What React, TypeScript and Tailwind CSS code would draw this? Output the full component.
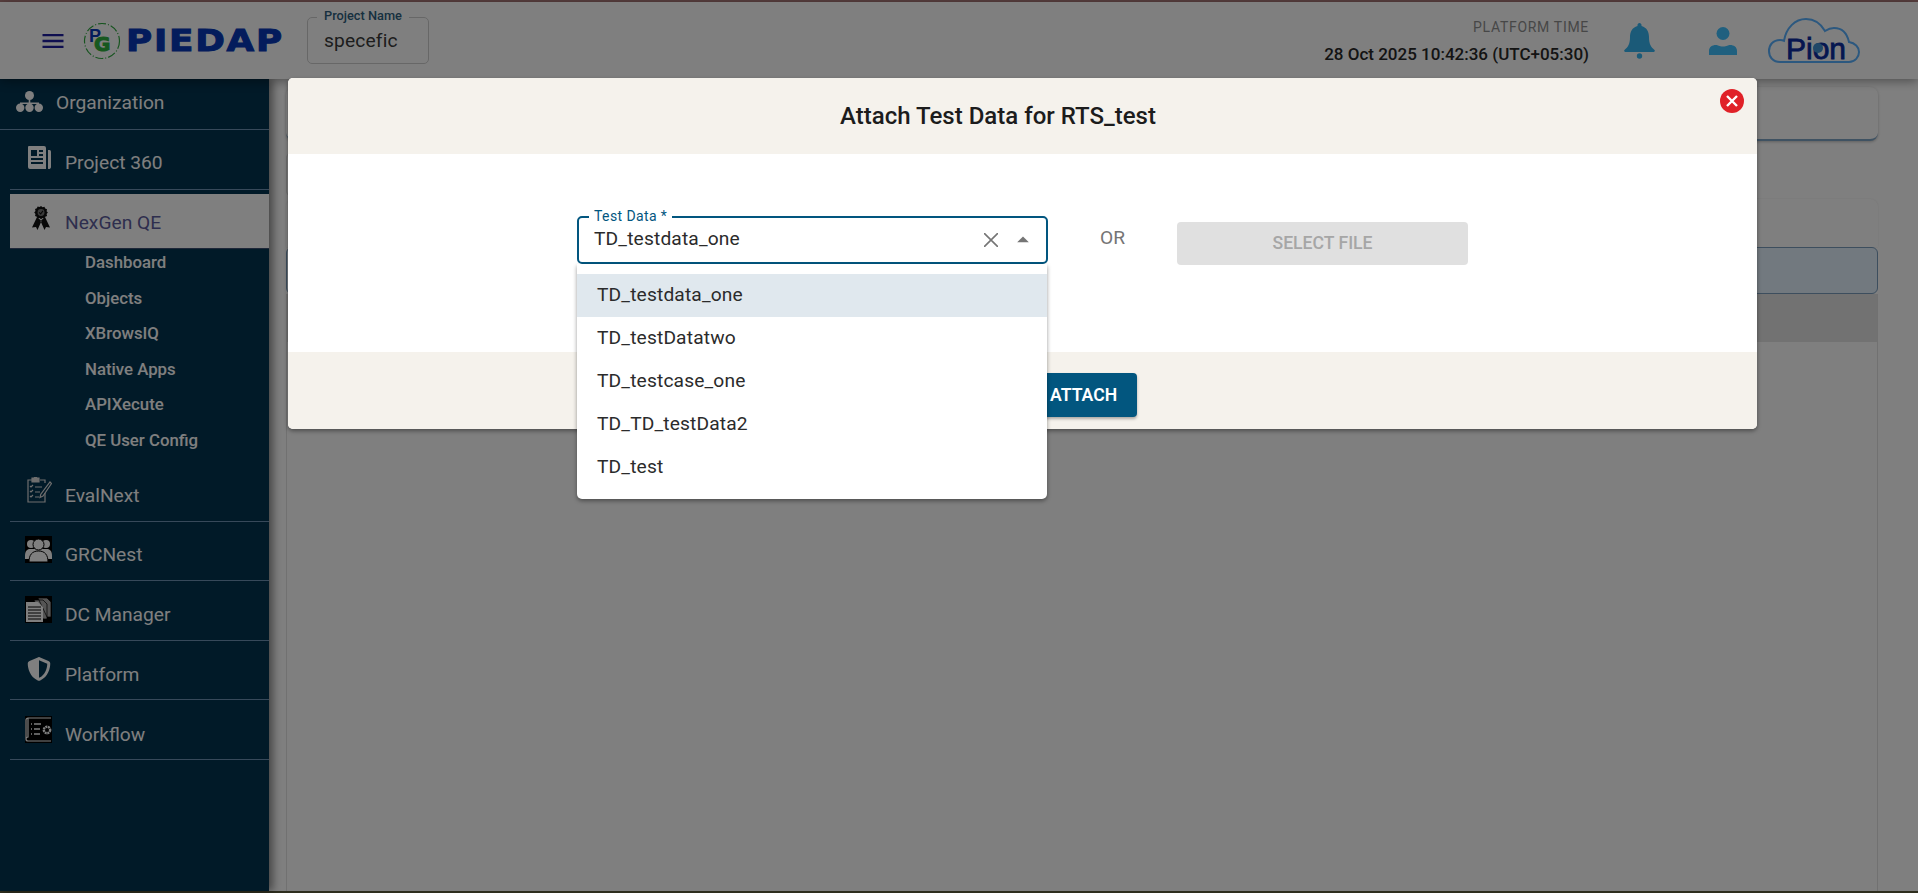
import type { ReactNode } from "react";
import { FaShieldHalved } from "react-icons/fa6";

const SUB_ITEMS = ["Dashboard", "Objects", "XBrowsIQ", "Native Apps", "APIXecute", "QE User Config"];
const OPTIONS = ["TD_testdata_one", "TD_testDatatwo", "TD_testcase_one", "TD_TD_testData2", "TD_test"];

function OrgIcon() {
  return (
    <svg viewBox="0 0 27 21" className="h-[21px] w-[27px]" fill="#fff">
      <circle cx="13.500" cy="4.500" r="4.500" />
      <path d="M12.700 8h1.600v3.500H23V14h-1.500v-1H14.300v1h-1.600v-1H5.500v1H4v-2.500h8.700z" />
      <circle cx="4.200" cy="16.800" r="4.200" />
      <circle cx="13.500" cy="16.800" r="4.200" />
      <circle cx="22.800" cy="16.800" r="4.200" />
    </svg>
  );
}

function NewsIcon() {
  return (
    <svg viewBox="0 0 24 24" className="h-[24px] w-[24px]" fill="#fff">
      <path
        fillRule="evenodd"
        d="M2 0h15a2 2 0 0 1 2 2v21H3a2 2 0 0 1-2-2V1a1 1 0 0 1 1-1zm2 4v6h6V4H4zm8 0v2h4V4h-4zm0 4v2h4V8h-4zM4 12v2h12v-2H4zm0 4v2h12v-2H4z"
      />
      <path d="M21 4h1.500a1.500 1.500 0 0 1 1.500 1.500V21a2 2 0 0 1-3 1.700V4z" />
    </svg>
  );
}

function AwardIcon() {
  return (
    <svg viewBox="0 0 18 24" className="h-[24px] w-[18px]">
      <path d="M5 11 0 21.500l4-.5 1.500 3L9.500 15zM13 11l5 10.500-4-.5-1.500 3L8.500 15z" fill="#111" />
      <g transform="translate(2.200 0) scale(.76)">
        <path
          d="M9 0l2 1.600 2.500-.6 1 2.400 2.400 1-.6 2.500L18 8.500l-1.700 2 .6 2.500-2.400 1-1 2.400-2.500-.6L9 17.500l-2-1.700-2.500.6-1-2.400-2.400-1 .6-2.500L0 8.500l1.700-2-.6-2.500 2.400-1 1-2.400 2.500.6z"
          fill="#111"
        />
        <circle cx="9" cy="8.500" r="4.500" fill="#777" />
        <path d="M6.500 8.500l2 2 3-4" stroke="#111" strokeWidth="1.500" fill="none" />
      </g>
    </svg>
  );
}

function EvalIcon() {
  return (
    <svg viewBox="0 0 26 26" className="h-[26px] w-[26px]" fill="none" stroke="#ddd" strokeWidth="1.200">
      <path d="M7 3H2v22h17v-9M14 3h5v3" />
      <path d="M6 1h2l1-1h1l1 1h2v4H6z" fill="#ddd" />
      <path d="M4 9l1 1 2-2M4 14l1 1 2-2M4 19l1 1 2-2M9 10h7M9 15h5M9 20h4" />
      <path d="M24 5l1.500 1.500L17 19l-3 1.500.8-3.300z" />
    </svg>
  );
}

function GroupIcon() {
  return (
    <svg viewBox="0 0 27 27" className="h-[27px] w-[27px] bg-black" fill="#fff">
      <circle cx="6" cy="8" r="4" />
      <circle cx="21" cy="8" r="4" />
      <path d="M0 20c0-5 2-7 5-7h17c3 0 5 2 5 7v3H0z" />
      <circle cx="13.500" cy="8.500" r="5.500" stroke="#000" />
      <path d="M4 26c0-7 3-11 9.500-11S23 19 23 26z" stroke="#000" />
    </svg>
  );
}

function DocsIcon() {
  return (
    <svg viewBox="0 0 27 27" className="h-[27px] w-[27px] bg-black">
      <path d="M13 2h9l4 4v15h-4zM9 4h9l4 4v15h-4z" fill="#aaa" stroke="#000" strokeWidth=".700" />
      <path d="M1 6h12l5 5v15H1z" fill="#fff" />
      <path d="M3 11h13M3 14h13M3 17h13M3 20h13M3 23h13" stroke="#000" strokeWidth="1" />
    </svg>
  );
}

function WorkflowIcon() {
  return (
    <svg viewBox="0 0 27 27" className="h-[27px] w-[27px] bg-black" fill="none" stroke="#fff">
      <path d="M3 2h23M3 2a2 2 0 0 0-2 2v19a2 2 0 0 0 2 2h23M3 2v19a2 2 0 0 0-2 2" strokeWidth="1.200" />
      <path d="M6 8h1M9 8h7M6 13h1M9 13h6M6 18h1M9 18h6" strokeWidth="1.600" />
      <circle cx="22" cy="14" r="3.200" strokeWidth="2.400" strokeDasharray="2 .6" />
    </svg>
  );
}

function MainItem({ icon, label, top = 9 }: { icon: ReactNode; label: string; top?: number }) {
  return (
    <div
      className="ml-[10px] flex h-[59.500px] items-center gap-[13px] border-b border-[#6f93b5] pl-[15px] text-white"
      style={{ paddingTop: top }}
    >
      <span className="mb-[12px] flex w-[27px] justify-center">{icon}</span>
      <span>{label}</span>
    </div>
  );
}

function Sidebar() {
  return (
    <aside className="z-10 flex w-[269px] shrink-0 flex-col bg-[#033450] text-[19.200px] shadow-[4px_0_8px_rgba(0,0,0,0.45)]">
      <div className="flex h-[51px] items-center gap-[13px] border-b border-[#6f93b5] pb-[1px] pl-[16px] text-white">
        <span className="mb-[4px]">
          <OrgIcon />
        </span>
        <span>Organization</span>
      </div>
      <MainItem icon={<NewsIcon />} label="Project 360" />
      <div className="mt-[4px] ml-[10px] flex h-[55px] items-center gap-[13px] border-b border-[#3c4f70] bg-white pt-[6px] pl-[20px] text-[#5c5c9c]">
        <span className="mb-[12px] flex w-[22px] justify-center">
          <AwardIcon />
        </span>
        <span>NexGen QE</span>
      </div>
      <ul className="flex flex-col gap-[7.600px] pl-[85px] text-[16.800px] font-medium text-white">
        {SUB_ITEMS.map((s) => (
          <li key={s} className="flex h-[28px] items-center">
            {s}
          </li>
        ))}
      </ul>
      <div className="h-[8px]" />
      <MainItem icon={<EvalIcon />} label="EvalNext" />
      <MainItem icon={<GroupIcon />} label="GRCNest" />
      <MainItem icon={<DocsIcon />} label="DC Manager" />
      <MainItem icon={<FaShieldHalved className="h-[24px] w-[24px]" />} label="Platform" top={10} />
      <MainItem icon={<WorkflowIcon />} label="Workflow" top={11} />
    </aside>
  );
}

function TopBar() {
  return (
    <header className="z-20 flex h-[77px] shrink-0 items-center bg-white pr-[58px] pl-[39px] shadow-[0_2px_10px_rgba(0,0,0,0.4)]">
      <svg viewBox="0 0 24 24" className="h-[28px] w-[28px]" fill="#1e1ea0">
        <path d="M3 18h18v-2H3v2zm0-5h18v-2H3v2zm0-7v2h18V6H3z" />
      </svg>
      <svg viewBox="0 0 38 38" className="ml-[16px] h-[38px] w-[38px]">
        <circle cx="19" cy="19" r="17.500" fill="none" stroke="#2fa83f" strokeWidth="1.200" strokeDasharray="8 2 1 2" />
        <text x="6" y="20" fontFamily="Liberation Sans" fontWeight="700" fontSize="18" fill="#0838b8">
          P
        </text>
        <text x="11" y="29" fontFamily="DejaVu Sans" fontWeight="700" fontSize="20" fill="#2fb03f" stroke="#2fb03f" strokeWidth="1">
          G
        </text>
      </svg>
      <span className="ml-[5px] w-[153px] origin-left scale-x-[1.19] font-['DejaVu_Sans',sans-serif] text-[30px] leading-none font-bold tracking-[1.500px] text-[#0838b8] [-webkit-text-stroke:1px_#0838b8]">
        PIEDAP
      </span>
      <div className="relative ml-[28px] flex h-[47px] w-[122px] items-center rounded-[5px] border border-[#cfcfcf] pt-[1px] pl-[16px] text-[19.200px] tracking-[0.15px] text-[#3a3a3a]">
        <span className="absolute -top-[12px] left-[9px] bg-white px-[7px] text-[12.800px] font-medium tracking-normal text-[#2f5f80]">
          Project Name
        </span>
        specefic
      </div>
      <div className="ml-auto flex flex-col items-end">
        <span className="text-[14px] leading-[20px] tracking-[0.7px] text-[#8f8f8f]">PLATFORM TIME</span>
        <span className="mt-[6px] text-[17px] leading-[22px] font-medium text-[#282828]">
          28 Oct 2025 10:42:36 (UTC+05:30)
        </span>
      </div>
      <svg viewBox="0 0 31 36" className="ml-[35px] h-[36px] w-[31px]" fill="#36b4f0">
        <path d="M15.500 0c1.200 0 2 1 2 2v1C23 4.500 25 9 25 14c0 7 2 10 5.500 13q1 1-.5 2H1q-1.500-1-.5-2C4 24 6 21 6 14 6 9 8 4.500 13.500 3V2c0-1 .8-2 2-2z" />
        <circle cx="15.500" cy="33" r="2.700" />
      </svg>
      <svg viewBox="0 0 28 28" className="ml-[54px] h-[28px] w-[28px]" fill="#40c0ff">
        <circle cx="14" cy="6.500" r="6.500" />
        <path d="M0 28v-4c0-4 3-6 7-6 2 0 3 1.500 7 1.500s5-1.500 7-1.500c4 0 7 2 7 6v4z" />
      </svg>
      <svg viewBox="0 0 92 46" className="ml-[31px] h-[46px] w-[92px]">
        <path
          d="M12 44C5 44 1 39 1 33c0-6 4-11 11-11 2 0 3 .3 4 .8C18 10 27 1 38 1c9 0 15 5 19 12 3-2 6-3 9-3 8 0 13 5 15 14 6 1 10 5 10 10s-4 10-10 10z"
          fill="none"
          stroke="#58b0ff"
          strokeWidth="2"
        />
        <text x="18" y="41" fontFamily="Liberation Sans" fontSize="30" fill="#0c2ca0" stroke="#0c2ca0" strokeWidth=".800">
          Pion
        </text>
        <circle cx="50" cy="30" r="5" fill="#4090d0" />
      </svg>
    </header>
  );
}

function PageBehind() {
  return (
    <main className="flex flex-1 flex-col pt-[8px] pr-[40px] pl-[17px]">
      <div className="h-[54px] rounded-[8px] border-b-2 border-[#7fa5c5] bg-white shadow-[0_1px_3px_rgba(0,0,0,0.25)]" />
      <div className="mt-[11px] h-[45px] w-[400px] rounded-[6px] border border-[#dcdcdc]" />
      <div className="mt-[2px] h-[48px] rounded-t-[8px] bg-white shadow-[0_0_2px_rgba(0,0,0,0.1)]" />
      <div className="h-[47px] rounded-[6px] border border-[#7a9dbd] bg-[#e4f2ff]" />
      <div className="flex flex-1 flex-col border-x border-[#e2e2e2]">
        <div className="h-[48px] bg-[#e4e4e4]" />
      </div>
    </main>
  );
}

function AttachDialog() {
  return (
    <div className="absolute top-[78px] left-[288px] flex w-[1469px] flex-col rounded-[5px] bg-white shadow-[0_2px_4px_rgba(0,0,0,0.4)]">
      <div className="flex h-[76px] items-center justify-center rounded-t-[5px] bg-[#f5f2ec] pr-[49px] text-[24px] font-medium text-[#1c1c1c]">
        Attach Test Data for RTS_test
      </div>
      <button className="absolute top-[11px] right-[13px] flex h-[24px] w-[24px] items-center justify-center rounded-full bg-[#e02128]">
        <svg viewBox="0 0 12 12" className="h-[12px] w-[12px]" stroke="#fff" strokeWidth="2.400">
          <path d="M1 1l10 10M11 1L1 11" />
        </svg>
      </button>

      <div className="flex h-[198px] items-start pt-[62px] pl-[289px]">
        <div className="relative h-[48px] w-[471px]">
          <div className="flex h-full items-center rounded-[5px] border-2 border-[#02567f] pb-[1px] pl-[15px] text-[19.200px] tracking-[0.15px] text-[#2b2b2b]">
            TD_testdata_one
          </div>
          <span className="absolute -top-[9px] left-[12px] bg-white px-[5px] text-[14px] leading-[18px] tracking-[0.4px] text-[#02567f]">
            Test Data *
          </span>
          <svg viewBox="0 0 14 14" className="absolute top-[17px] left-[407px] h-[14px] w-[14px]" stroke="#757575" strokeWidth="1.600">
            <path d="M0 0l14 14M14 0L0 14" />
          </svg>
          <svg viewBox="0 0 24 24" className="absolute top-[10px] left-[432px] h-[28px] w-[28px]" fill="#757575">
            <path d="M7 14l5-5 5 5z" />
          </svg>
          <ul className="absolute top-full left-0 z-10 w-[470px] rounded-b-[5px] bg-white py-[10px] text-[19.200px] tracking-[0.15px] text-[#2b2b2b] shadow-[0_2px_4px_rgba(0,0,0,0.4)]">
            {OPTIONS.map((o, i) => (
              <li key={o} className={`flex h-[43px] items-center pl-[20px] ${i === 0 ? "bg-[#e0e8ee]" : ""}`}>
                {o}
              </li>
            ))}
          </ul>
        </div>
        <span className="mx-[52px] flex h-[44px] items-center text-[19.200px] text-[#757575]">OR</span>
        <button className="mt-[6px] h-[43px] w-[291px] rounded-[4px] bg-[#e0e0e0] text-[17.600px] font-medium text-[#a6a6a6]">
          SELECT FILE
        </button>
      </div>

      <div className="flex h-[77px] items-start rounded-b-[5px] bg-[#f5f2ec] pt-[21px] pl-[742px]">
        <button className="h-[44px] w-[107px] rounded-[4px] bg-[#02567f] pl-[20px] text-left text-[17.600px] font-semibold text-white shadow-[0_2px_3px_rgba(0,0,0,0.3)]">
          ATTACH
        </button>
      </div>
    </div>
  );
}

export default function App() {
  return (
    <div className="relative flex h-[893px] flex-col overflow-hidden bg-white font-[Roboto,sans-serif]">
      <div className="h-[2px] shrink-0 bg-[#b48080]" />
      <TopBar />
      <div className="flex min-h-0 flex-1">
        <Sidebar />
        <PageBehind />
      </div>
      <div className="h-[2px] shrink-0 bg-[#5c5c3c]" />
      <div className="absolute inset-0 z-30 bg-black/50">
        <AttachDialog />
      </div>
    </div>
  );
}
